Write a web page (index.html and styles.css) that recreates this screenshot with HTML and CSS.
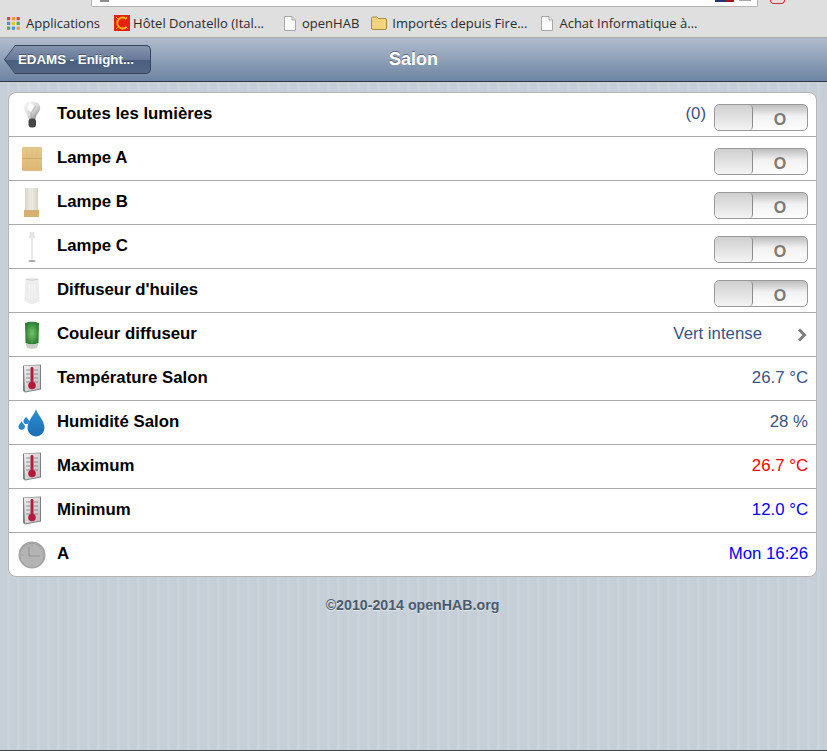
FILE: index.html
```html
<!DOCTYPE html>
<html lang="fr">
<head>
<meta charset="utf-8">
<title>Salon</title>
<link rel="stylesheet" href="styles.css">
</head>
<body>
<svg class="defs" width="0" height="0" aria-hidden="true">
  <defs>
    <linearGradient id="paper" x1="0" y1="0" x2="1" y2="1"><stop offset="0" stop-color="#f2f2f2"/><stop offset="1" stop-color="#bcbcbc"/></linearGradient>
    <linearGradient id="bulb" x1="0" y1="0" x2="1" y2="1"><stop offset="0" stop-color="#fdfdfd"/><stop offset=".55" stop-color="#d8d8d8"/><stop offset="1" stop-color="#777"/></linearGradient>
    <linearGradient id="wood" x1="0" y1="0" x2="0" y2="1"><stop offset="0" stop-color="#e6c88c"/><stop offset="1" stop-color="#dcb873"/></linearGradient>
    <linearGradient id="shade" x1="0" y1="0" x2="1" y2="0"><stop offset="0" stop-color="#d9d5c9"/><stop offset=".5" stop-color="#f0ede6"/><stop offset="1" stop-color="#d5d1c5"/></linearGradient>
    <radialGradient id="glow"><stop offset="0" stop-color="#76c46a"/><stop offset="1" stop-color="#2f7f34"/></radialGradient>
    <linearGradient id="drop" x1="0" y1="0" x2="0" y2="1"><stop offset="0" stop-color="#2e8fd2"/><stop offset="1" stop-color="#1a6db3"/></linearGradient>
    <symbol id="thermo" viewBox="0 0 20 29">
      <path d="M1 1.500 19 .5V25.500L3 28.500 1 27Z" fill="#7f7f7f"/>
      <path d="M2 2 18 1.300V24.700L3 27.500Z" fill="url(#paper)"/>
      <path d="M4 6h4M4 10h4M4 14h4M4 18h4M12 6h4M12 10h4M12 14h4M12 18h4" stroke="#7a7a7a" stroke-width=".8"/>
      <rect x="8.500" y="3" width="3" height="17" rx="1.400" fill="#b31b3c"/>
      <circle cx="10" cy="21.500" r="3.800" fill="#b31b3c"/>
    </symbol>
  </defs>
</svg>
<div class="browser">
  <div class="toolbar">
    <div class="address">
      <span class="favicon"></span>
      <span class="flag"></span>
      <span class="dots"></span>
    </div>
    <span class="ext"></span>
  </div>
  <div class="bookmarks">
    <div class="bookmark bookmark-apps"><svg width="13" height="13" viewBox="0 0 13 13"><rect width="3.200" height="3.200" fill="#e0473a"/><rect x="4.800" width="3.200" height="3.200" fill="#e5a02f"/><rect x="9.600" width="3.200" height="3.200" fill="#e0473a"/><rect y="4.800" width="3.200" height="3.200" fill="#4a90d9"/><rect x="4.800" y="4.800" width="3.200" height="3.200" fill="#e5c02f"/><rect x="9.600" y="4.800" width="3.200" height="3.200" fill="#4fa860"/><rect y="9.600" width="3.200" height="3.200" fill="#4fa860"/><rect x="4.800" y="9.600" width="3.200" height="3.200" fill="#4a90d9"/><rect x="9.600" y="9.600" width="3.200" height="3.200" fill="#e5a02f"/></svg>Applications</div>
    <div class="bookmark bookmark-hotel"><svg width="16" height="16" viewBox="0 0 16 16"><rect width="16" height="16" fill="#e8210f"/><path d="M12.500 4A5.500 5.500 0 1 0 12.500 12" fill="none" stroke="#f5b21a" stroke-width="1.800"/><path d="M2 2l2 2M13 2l-1 2M2 14l2-2M14 14l-2-2" stroke="#f5b21a"/></svg>Hôtel Donatello (Ital...</div>
    <div class="bookmark bookmark-openhab"><svg width="12" height="15" viewBox="0 0 12 15"><path d="M.5.500H8L11.500 4V14.500H.5Z" fill="#fafafa" stroke="#a8a8a8"/><path d="M8 .5V4H11.500" fill="#e4e4e4" stroke="#a8a8a8"/></svg>openHAB</div>
    <div class="bookmark bookmark-folder"><svg width="16" height="14" viewBox="0 0 16 14"><path d="M.5 2.500Q.5 1 2 1H6L7.500 2.500H14Q15.500 2.500 15.500 4V12Q15.500 13.500 14 13.500H2Q.5 13.500 .5 12Z" fill="#f3d27c" stroke="#a98a3f"/></svg>Importés depuis Fire...</div>
    <div class="bookmark"><svg width="12" height="15" viewBox="0 0 12 15"><path d="M.5.500H8L11.500 4V14.500H.5Z" fill="#fafafa" stroke="#a8a8a8"/><path d="M8 .5V4H11.500" fill="#e4e4e4" stroke="#a8a8a8"/></svg>Achat Informatique à...</div>
  </div>
</div>
<header class="navbar">
  <a class="back"><span class="back-text">EDAMS - Enlight...</span></a>
  <h1 class="title">Salon</h1>
</header>
<main class="page">
  <ul class="list">
    <li class="row">
      <span class="icon"><svg width="18" height="27" viewBox="0 0 18 27"><path d="M9 .5C4.500.5 .5 2.500 .8 7c.3 3.500 3.700 5.500 4.700 11h7c.8-5.500 4.700-7.500 4.700-11.500C17.200 2.500 13.500.5 9 .5Z" fill="url(#bulb)"/><path d="M7 1.500 4 7l4 4 3-6Z" fill="#fff"/><path d="M8 11 9 18M13 5l-4 6" stroke="#a8a8a8" stroke-width=".7" fill="none"/><rect x="5.500" y="17.500" width="7.500" height="9" rx="3" fill="#454545"/></svg></span>
      <span class="label">Toutes les lumières</span>
      <span class="value">(0)</span>
      <span class="toggle"><span class="knob"></span><span class="off">O</span></span>
    </li>
    <li class="row">
      <span class="icon"><svg width="20" height="24" viewBox="0 0 20 24"><rect width="20" height="24" rx="1" fill="url(#wood)"/><path d="M5 0v24M10 0v24M15 0v24" stroke="#d9b672" stroke-width=".6"/><rect y="11" width="20" height="1" fill="#cfa964"/></svg></span>
      <span class="label">Lampe A</span>
      <span class="toggle"><span class="knob"></span><span class="off">O</span></span>
    </li>
    <li class="row">
      <span class="icon"><svg width="15" height="29" viewBox="0 0 15 29"><rect x="1" width="13" height="22" fill="url(#shade)"/><path d="M4 0v22M7.500 0v22M11 0v22" stroke="#e2decf" stroke-width=".7"/><rect y="22" width="15" height="7" fill="#d6b06e"/></svg></span>
      <span class="label">Lampe B</span>
      <span class="toggle"><span class="knob"></span><span class="off">O</span></span>
    </li>
    <li class="row">
      <span class="icon"><svg width="8" height="30" viewBox="0 0 8 30"><path d="M2 0h4l1 6H1Z" fill="#e4e4e4"/><rect x="3.400" y="6" width="1.200" height="22" fill="#dcdcdc"/><ellipse cx="4" cy="29" rx="3.500" ry="1" fill="#a5a5a5"/></svg></span>
      <span class="label">Lampe C</span>
      <span class="toggle"><span class="knob"></span><span class="off">O</span></span>
    </li>
    <li class="row">
      <span class="icon"><svg width="16" height="28" viewBox="0 0 16 28"><path d="M1.500 2Q8-.5 14.500 2L15.500 24Q8 30 .5 24Z" fill="#ececec"/><path d="M5 6v16M8 6v17M11 6v16" stroke="#f7f7f7"/><path d="M1.500 2Q8 4.500 14.500 2" fill="none" stroke="#d2d2d2"/></svg></span>
      <span class="label">Diffuseur d'huiles</span>
      <span class="toggle"><span class="knob"></span><span class="off">O</span></span>
    </li>
    <li class="row">
      <span class="icon"><svg width="16" height="28" viewBox="0 0 16 28"><path d="M1 2Q8-.5 15 2L14.500 22Q8 25 1.500 22Z" fill="url(#glow)"/><path d="M1.500 22Q8 25 14.500 22L13 27Q8 28.500 3 27Z" fill="#c7cfc7"/></svg></span>
      <span class="label">Couleur diffuseur</span>
      <span class="value value-select">Vert intense</span>
      <svg class="chevron" width="10" height="14" viewBox="0 0 10 14"><path d="M2 1.500 7.500 7 2 12.500" fill="none" stroke="#7d7d7d" stroke-width="3"/></svg>
    </li>
    <li class="row">
      <span class="icon"><svg width="20" height="29"><use href="#thermo"/></svg></span>
      <span class="label">Température Salon</span>
      <span class="value">26.7 °C</span>
    </li>
    <li class="row">
      <span class="icon"><svg width="28" height="28" viewBox="0 0 28 28"><path d="M18 0C16.500 6 9.500 11 9.500 19a8.500 8.500 0 0 0 17 0C26.500 11 19.500 6 18 0Z" fill="url(#drop)"/><path d="M3.500 12C3 14 .5 15.500 .5 17.500a3.200 3.200 0 0 0 6.400 0C6.900 15.500 4 14 3.500 12Z" fill="#2a86c8"/><path d="M8 7.500C7.500 9 5.500 10.500 5.500 12.300a2.800 2.800 0 0 0 5.600 0C11.100 10.500 8.500 9 8 7.500Z" fill="#2a86c8"/></svg></span>
      <span class="label">Humidité Salon</span>
      <span class="value">28 %</span>
    </li>
    <li class="row">
      <span class="icon"><svg width="20" height="29"><use href="#thermo"/></svg></span>
      <span class="label">Maximum</span>
      <span class="value value-max">26.7 °C</span>
    </li>
    <li class="row">
      <span class="icon"><svg width="20" height="29"><use href="#thermo"/></svg></span>
      <span class="label">Minimum</span>
      <span class="value value-min">12.0 °C</span>
    </li>
    <li class="row">
      <span class="icon"><svg width="28" height="28" viewBox="0 0 28 28"><circle cx="14" cy="14" r="13.500" fill="#a3a3a3"/><circle cx="14" cy="14.500" r="11.500" fill="#b4b4b4"/><path d="M11 6V15H22" fill="none" stroke="#8f8f8f" stroke-width="1"/><path d="M14 4v2M14 23v2M4 14h2" stroke="#a0a0a0"/></svg></span>
      <span class="label">A</span>
      <span class="value value-min">Mon 16:26</span>
    </li>
  </ul>
  <footer class="copyright">©2010-2014 openHAB.org</footer>
</main>
</body>
</html>
```
FILE: styles.css
```css
* { box-sizing: border-box; }
html, body { margin: 0; height: 100%; }
body {
  display: flex;
  flex-direction: column;
  height: 751px;
  overflow: hidden;
  font-family: "Liberation Sans", Arial, sans-serif;
  background: #c6cfd8;
}
.defs { position: absolute; }

.browser { flex: none; height: 38px; background: #dfdfdf; border-bottom: 1px solid #a9a9a9; }
.toolbar { display: flex; align-items: flex-start; height: 7px; padding-left: 91px; }
.address {
  display: flex;
  align-items: flex-start;
  width: 667px;
  height: 7px;
  padding: 0 6px 0 8px;
  background: #fff;
  border: 1px solid #b3b3b3;
  border-top: 0;
  border-radius: 0 0 2px 2px;
}
.favicon { width: 9px; height: 2px; background: #8d8d8d; }
.flag { width: 19px; height: 2px; margin-left: auto; background: linear-gradient(90deg, #26346e 0 50%, #a01523 50%); }
.dots { width: 12px; height: 1px; margin-left: 5px; background: #a5a5a5; }
.ext {
  width: 15px;
  height: 4px;
  margin-left: 12px;
  background: #e8dcdc;
  border: 1px solid #c8343a;
  border-top: 0;
  border-radius: 0 0 7px 7px;
}
.bookmarks {
  display: flex;
  align-items: center;
  height: 30px;
  padding: 2px 0 0 7px;
  font-family: "Open Sans", sans-serif;
  font-size: 13px;
  color: #2c2c2c;
}
.bookmark { display: flex; align-items: center; gap: 6px; white-space: nowrap; }
.bookmark-apps { margin-right: 14px; }
.bookmark-hotel { gap: 3px; margin-right: 20px; }
.bookmark-openhab { margin-right: 12px; }
.bookmark-folder { gap: 5px; margin-right: 14px; }

.navbar {
  flex: none;
  position: relative;
  display: flex;
  align-items: center;
  justify-content: center;
  height: 44px;
  background: linear-gradient(#b0bccd, #6d84a2);
  border-bottom: 1px solid #2d3642;
}
.back {
  position: absolute;
  left: 4px;
  top: 7px;
  width: 147px;
  height: 29px;
  padding: 1px;
  background: #36435a;
  border-radius: 5px;
  clip-path: polygon(0 50%, 11px 0, 100% 0, 100% 100%, 11px 100%);
}
.back-text {
  display: block;
  height: 100%;
  padding-left: 13px;
  line-height: 27px;
  font-size: 13.3px;
  font-weight: 700;
  color: #fff;
  text-shadow: 0 -1px 0 rgba(0,0,0,.35);
  background: linear-gradient(#8494ad 0, #68799a 50%, #4c5e7d 51%, #556786 100%);
  border-radius: 4px;
  clip-path: polygon(0 50%, 10px 0, 100% 0, 100% 100%, 10px 100%);
}
.title {
  margin: 0;
  font-size: 18px;
  font-weight: 700;
  color: #fff;
  text-shadow: 0 -1px 0 rgba(0,0,0,.4);
}

.page {
  flex: 1;
  padding: 10px 10px 0 8px;
  background: repeating-linear-gradient(90deg, #c6cfd7 0 7px, #cad2da 7px 10px);
  border-bottom: 1px solid #444;
}
.list {
  list-style: none;
  margin: 0;
  padding: 0;
  background: #fff;
  border: 1px solid #b4b4b4;
  border-radius: 8px;
  overflow: hidden;
}
.row {
  display: flex;
  align-items: center;
  height: 44px;
  padding-right: 8px;
  border-bottom: 1px solid #aaa;
}
.row:last-child { height: 43px; border-bottom: 0; }
.icon { display: flex; justify-content: center; flex: none; width: 48px; padding: 0 4px 0 1px; }
.label { flex: 1; margin-bottom: 2px; font-size: 16.8px; font-weight: 700; color: #000; }
.value { margin-bottom: 2px; font-size: 16.8px; color: #385487; }
.value-select { margin-right: 35px; }
.value-max { color: #f00; }
.value-min { color: #00f; }
.chevron { margin-right: 1px; }

.toggle {
  display: flex;
  width: 94px;
  height: 27px;
  margin: 6px 0 0 8px;
  border: 1px solid #9a9a9a;
  border-radius: 5px;
  background: linear-gradient(#bdbdbd 0, #f2f2f2 45%, #fdfdfd);
  overflow: hidden;
}
.knob {
  width: 38px;
  background: linear-gradient(#cfcfcf, #f4f4f4);
  border-right: 1px solid #8c8c8c;
  border-radius: 4px;
}
.off {
  flex: 1;
  padding-top: 2px;
  text-align: center;
  line-height: 25px;
  font-size: 16px;
  font-weight: 700;
  color: #7a7a7a;
}

.copyright {
  margin-top: 20px;
  text-align: center;
  font-size: 14.2px;
  font-weight: 700;
  color: #4d5a6c;
  text-shadow: 0 1px 0 rgba(255,255,255,.5);
}
```
